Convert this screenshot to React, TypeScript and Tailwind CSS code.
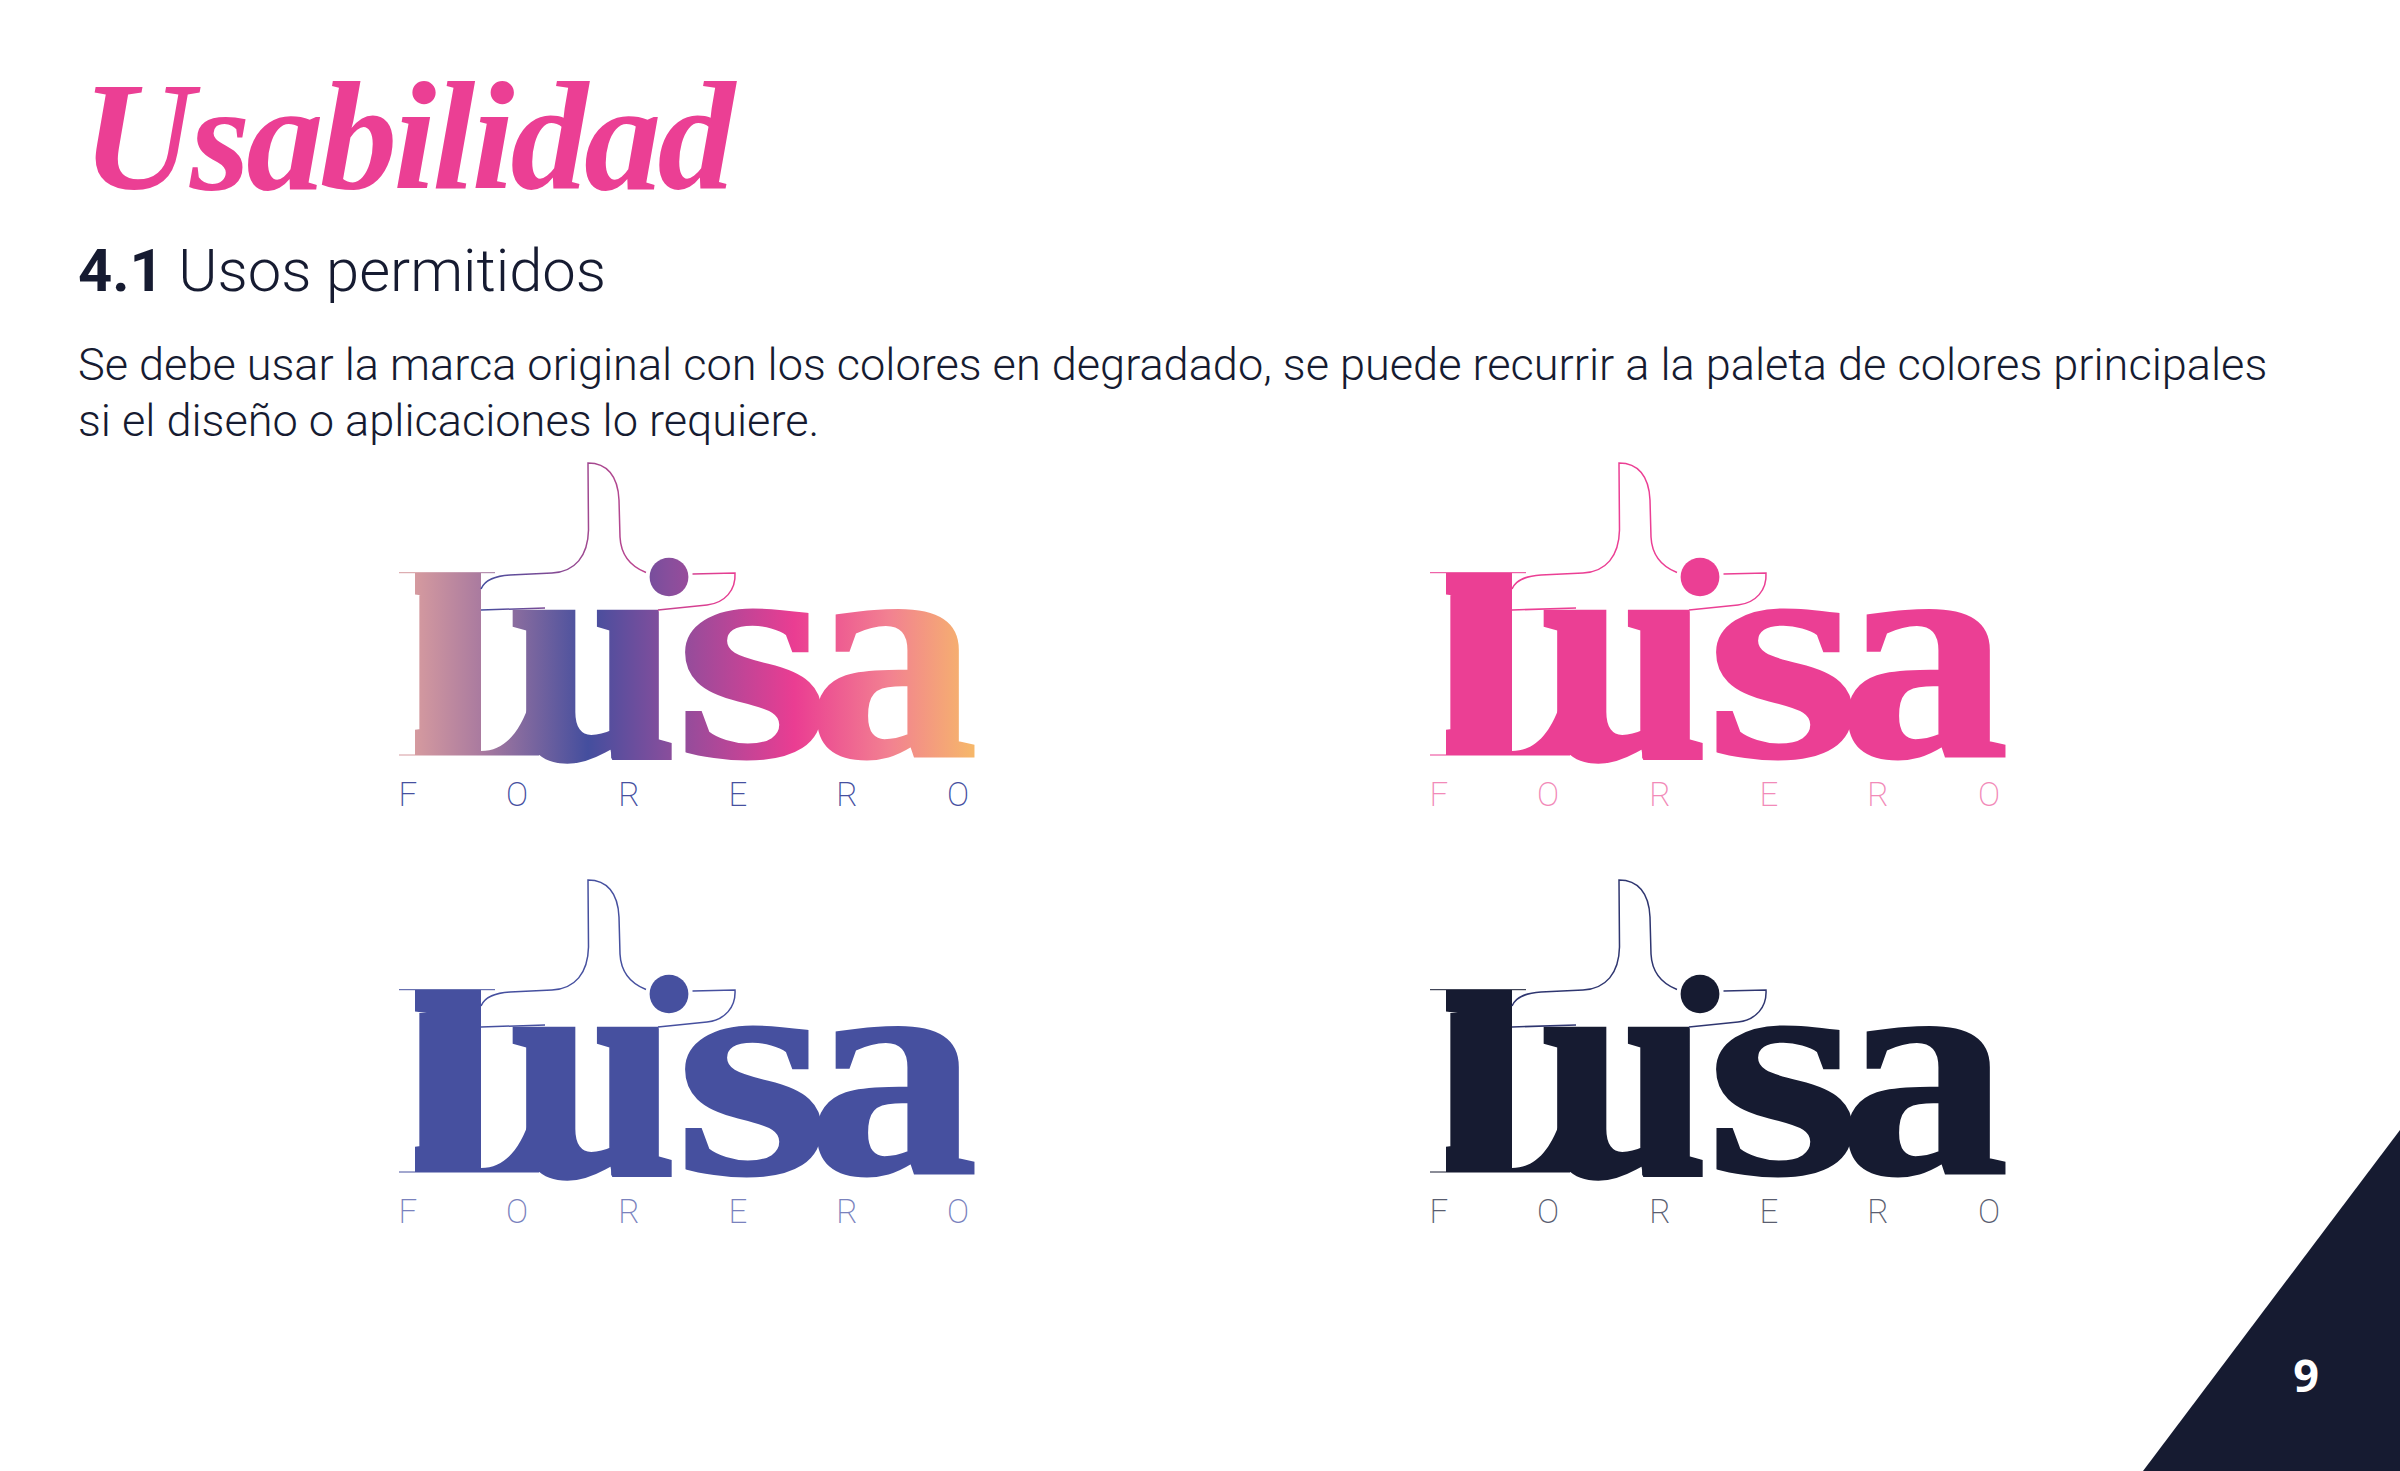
import React from "react";

const NAVY = "#161b31";
const letters = [
  { ch: "F", x: 38 },
  { ch: "O", x: 147 },
  { ch: "R", x: 259 },
  { ch: "E", x: 368 },
  { ch: "R", x: 477 },
  { ch: "O", x: 588 },
];

type LogoProps = {
  id: string;
  fill: string;
  line: string;
  small: string;
  gradient?: boolean;
};

const Logo = ({ id, fill, line, small, gradient }: LogoProps) => {
  const paint = gradient ? `url(#${id}-g)` : fill;
  const stroke = gradient ? `url(#${id}-l)` : line;
  return (
    <svg viewBox="0 20 620 370" className="block h-[370px] w-[620px]">
      <defs>
        <linearGradient id={`${id}-g`} gradientUnits="userSpaceOnUse" x1="45" y1="0" x2="603" y2="0">
          <stop offset="0" stopColor="#d59a9f" />
          <stop offset="0.12" stopColor="#a97a9f" />
          <stop offset="0.31" stopColor="#444e9e" />
          <stop offset="0.46" stopColor="#8a4e9c" />
          <stop offset="0.68" stopColor="#ea3d92" />
          <stop offset="0.85" stopColor="#f28191" />
          <stop offset="1" stopColor="#f6b76a" />
        </linearGradient>
        <linearGradient id={`${id}-l`} gradientUnits="userSpaceOnUse" x1="111" y1="0" x2="369" y2="0">
          <stop offset="0" stopColor="#444e9e" />
          <stop offset="0.45" stopColor="#a8488f" />
          <stop offset="1" stopColor="#ea3d92" />
        </linearGradient>
        {/* keeps only the stem of the L, the serifs are hairlines drawn below */}
        <clipPath id={`${id}-c`}>
          <path d="M45 133H111V315H45Z" />
        </clipPath>
        <mask id={`${id}-m`} maskUnits="userSpaceOnUse" x="0" y="20" width="620" height="370">
          <g fill="white" stroke="white" className="font-['Liberation_Serif'] font-bold">
            <g clipPath={`url(#${id}-c)`}>
              <text transform="translate(25 308) scale(1.25 1)" fontSize="262" strokeWidth="14">L</text>
            </g>
            <path d="M111 311C135 311 150 292 160 262H200V315H111Z" stroke="none" />
            <text transform="translate(142 316) scale(0.95 1)" fontSize="310" strokeWidth="8">u</text>
            <text transform="translate(238 316) scale(0.74 1)" fontSize="310" strokeWidth="5">ı</text>
            <text transform="translate(305 316) scale(1.28 1)" fontSize="310" strokeWidth="3">s</text>
            <text transform="translate(437.5 316) scale(1.1 1)" fontSize="310" strokeWidth="3">a</text>
          </g>
        </mask>
      </defs>
      <rect x="0" y="20" width="620" height="370" fill={paint} mask={`url(#${id}-m)`} />
      <ellipse cx="299" cy="137" rx="19.4" ry="19.3" fill={paint} />
      <g fill="none" stroke={stroke} strokeWidth="1.5">
        <path d="M111 149C115 139 126 136 140 135L182 133C205 132 218 116 218.5 90L218 23C237 23 248 36 249 60L250 97C251 117 262 127 276 132.5" />
        <path d="M322.5 134L365 133C366 150 355 163 337 165L288 170" />
        <path d="M111 170L175 168" />
      </g>
      <path d="M29 132.7H125M29 315H169" fill="none" stroke={paint} strokeWidth="1" />
      <g fill={small} textAnchor="middle" fontSize="33" className="font-['Roboto'] font-extralight">
        {letters.map((l, i) => (
          <text key={i} x={l.x} y="366">
            {l.ch}
          </text>
        ))}
      </g>
    </svg>
  );
};

export default function App() {
  return (
    <div className="relative h-[1471px] w-[2400px] overflow-hidden bg-white text-[#161b31]">
      <div className="h-[460px] pl-[78px] pt-[52px]">
        <h1 className="pl-[4px] font-['Liberation_Serif'] text-[155px] leading-[170px] font-bold italic tracking-[-4px] text-[#eb3f94]">
          Usabilidad
        </h1>
        <h2 className="mt-[15px] font-['Roboto'] text-[59.7px] leading-[68px] font-light">
          <span className="font-bold">4.1</span> Usos permitidos
        </h2>
        <p className="mt-[32px] w-[2300px] font-['Roboto'] text-[45.1px] leading-[56px] font-light">
          Se debe usar la marca original con los colores en degradado, se puede recurrir a la paleta de colores principales
          <br />
          si el diseño o aplicaciones lo requiere.
        </p>
      </div>
      <div className="ml-[370px] grid grid-cols-[620px_620px] gap-x-[411px] gap-y-[47px]">
        <Logo id="a" fill="" line="" small="#46509f" gradient />
        <Logo id="b" fill="#eb3f94" line="#eb3f94" small="#f28ab8" />
        <Logo id="c" fill="#46509f" line="#46509f" small="#7a82bd" />
        <Logo id="d" fill={NAVY} line="#2f3670" small="#5a5e70" />
      </div>
      <div className="absolute right-0 bottom-0 flex h-[341px] w-[257px] items-end justify-end bg-[#161b31] [clip-path:polygon(100%_0,100%_100%,0_100%)]">
        <span className="mr-[81px] mb-[66px] font-['Open_Sans'] text-[45px] leading-[60px] font-bold text-white">9</span>
      </div>
    </div>
  );
}
